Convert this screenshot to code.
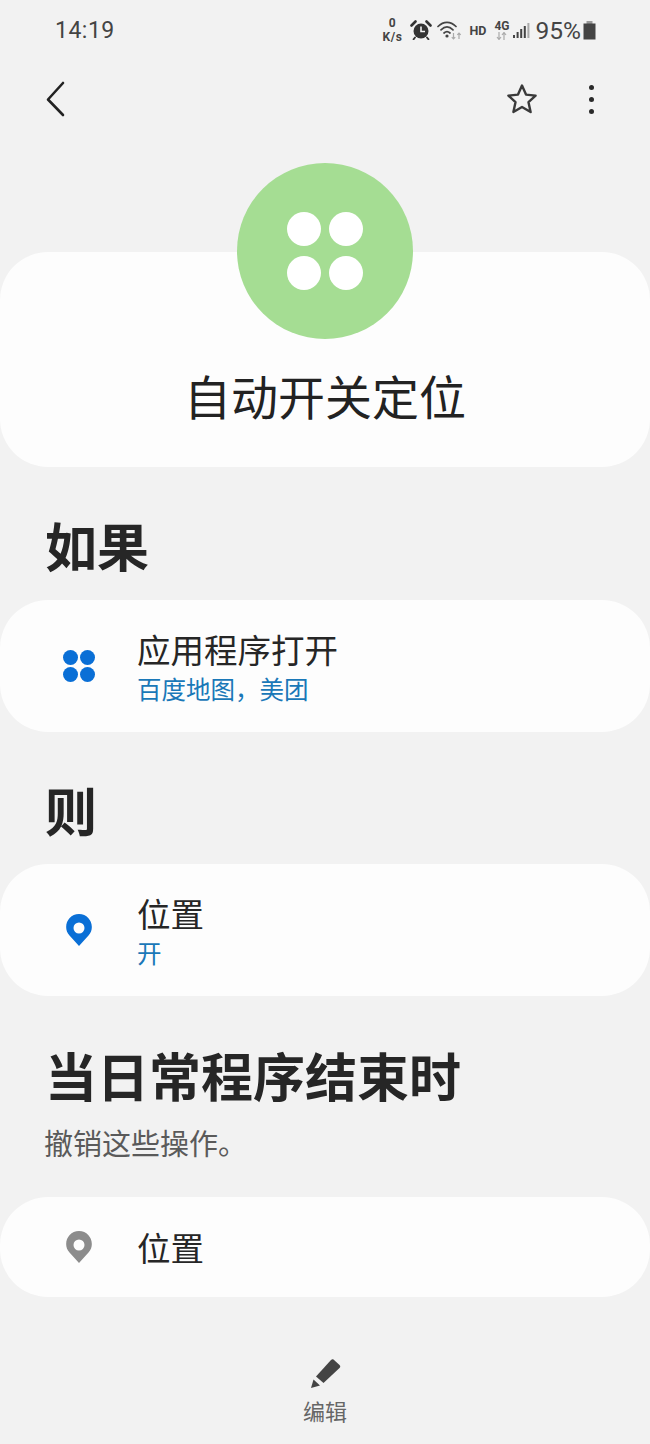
<div class="page">
  <div class="status">
    <span class="time">14:19</span>
    <div class="status-right">
      <span class="speed"><b>0</b><b>K/s</b></span>
      <svg class="alarm" width="22" height="20" viewBox="0 0 22 20">
        <circle cx="11" cy="11" r="7.5" fill="#333" />
        <path d="M11 6.5V11.5H15" fill="none" stroke="#f2f2f2" stroke-width="1.6" />
        <path d="M1.5 5.5L5.5 1.5M20.5 5.5L16.5 1.5" stroke="#333" stroke-width="2.6" stroke-linecap="round" />
        <path d="M5 17.5L3.5 19.3M17 17.5L18.5 19.3" stroke="#333" stroke-width="1.8" stroke-linecap="round" />
      </svg>
      <svg class="wifi" width="25" height="20" viewBox="0 0 25 20">
        <g fill="none" stroke="#444" stroke-width="1.7" stroke-linecap="round">
          <path d="M1 6.5C6.5 1 13.5 1 19 6.5" />
          <path d="M4 9.8C8 6 12 6 16 9.8" />
          <path d="M7 13C9 11.3 11 11.3 13 13" />
        </g>
        <circle cx="10" cy="16" r="1.6" fill="#444" />
        <path d="M16.5 13V19M14.8 17.2L16.5 19L18.2 17.2" fill="none" stroke="#aaa" stroke-width="1.2" />
        <path d="M22 19V13M20.3 14.8L22 13L23.7 14.8" fill="none" stroke="#aaa" stroke-width="1.2" />
      </svg>
      <span class="hd">HD</span>
      <span class="net">
        <b>4G</b>
        <svg width="11" height="8" viewBox="0 0 11 8">
          <path d="M3 0V7M1 5L3 7.5L5 5" fill="none" stroke="#aaa" stroke-width="1.2" />
          <path d="M8 8V1M6 3L8 .5L10 3" fill="none" stroke="#aaa" stroke-width="1.2" />
        </svg>
      </span>
      <svg class="signal" width="17" height="17" viewBox="0 0 17 17">
        <rect x="0" y="13" width="2" height="3" fill="#444" />
        <rect x="3.6" y="10" width="2" height="6" fill="#444" />
        <rect x="7.2" y="7" width="2" height="9" fill="#444" />
        <rect x="10.8" y="4" width="2" height="12" fill="#444" />
        <rect x="14.4" y="1" width="2" height="15" fill="#aaa" />
      </svg>
      <span class="pct">95%</span>
      <svg class="battery" width="13" height="19" viewBox="0 0 13 19">
        <rect x="3.5" y="0" width="6" height="3" fill="#999" />
        <rect x="0.5" y="2.5" width="12" height="16" fill="#444" />
      </svg>
    </div>
  </div>

  <div class="toolbar">
    <svg width="24" height="36" viewBox="0 0 24 36">
      <path d="M20 2L5 18.500L20 34" fill="none" stroke="#222" stroke-width="2.600" stroke-linecap="round" stroke-linejoin="round" />
    </svg>
    <div class="toolbar-right">
      <svg width="34" height="34" viewBox="0 0 34 34">
        <path d="M17 3.500L21 12.600L30.600 13.600L23.500 20.200L25.600 30L17 25L8.400 30L10.500 20.200L3.400 13.600L13 12.600Z" fill="none" stroke="#3a3a3a" stroke-width="2.400" stroke-linejoin="round" />
      </svg>
      <div class="dots"><i></i><i></i><i></i></div>
    </div>
  </div>

  <div class="circle">
    <div class="grid4"><i></i><i></i><i></i><i></i></div>
  </div>
  <div class="card hero">自动开关定位</div>

  <h2 class="first">如果</h2>
  <div class="card row tall">
    <div class="icon"><div class="grid4 small"><i></i><i></i><i></i><i></i></div></div>
    <div>
      <div class="row-title">应用程序打开</div>
      <div class="row-sub">百度地图，美团</div>
    </div>
  </div>

  <h2 class="then">则</h2>
  <div class="card row tall">
    <div class="icon">
      <svg width="28" height="34" viewBox="0 0 28 34">
        <path fill-rule="evenodd" fill="#0a6fd6" d="M14 33L4.500 22.500C-3 14 3 1 14 1S31 14 23.500 22.500ZM14 9.500A5.500 5.500 0 1 0 14 20.500A5.500 5.500 0 1 0 14 9.500Z" />
      </svg>
    </div>
    <div>
      <div class="row-title">位置</div>
      <div class="row-sub">开</div>
    </div>
  </div>

  <h2 class="end">当日常程序结束时</h2>
  <p class="note">撤销这些操作。</p>
  <div class="card row short">
    <div class="icon">
      <svg width="28" height="34" viewBox="0 0 28 34">
        <path fill-rule="evenodd" fill="#8c8c8c" d="M14 33L4.500 22.500C-3 14 3 1 14 1S31 14 23.500 22.500ZM14 9.500A5.500 5.500 0 1 0 14 20.500A5.500 5.500 0 1 0 14 9.500Z" />
      </svg>
    </div>
    <div class="row-title">位置</div>
  </div>

  <div class="edit">
    <svg width="32" height="32" viewBox="0 0 32 32">
      <path fill="#444" d="M24.500 1.500L30.500 7C31.500 8 31.500 9 30.500 10L14.500 25L7 18.500L22 2C23 1 23.500 1 24.500 1.500Z" />
      <path fill="#444" d="M4.500 21.500L11 27.500L2 30Z" />
    </svg>
    <span>编辑</span>
  </div>
</div>

<style>
  :global(body) {
    margin: 0;
    background: #f2f2f2;
  }
  .page {
    height: 1444px;
    overflow: hidden;
    background: #f2f2f2;
    display: flex;
    flex-direction: column;
    font-family: "Noto Sans CJK SC", "Noto Sans", sans-serif;
    color: #252525;
  }
  .status {
    height: 60px;
    padding: 0 54px 0 55px;
    display: flex;
    align-items: center;
    justify-content: space-between;
    font-family: Roboto, sans-serif;
    color: #444;
  }
  .time { font-size: 23px; letter-spacing: 0.5px; }
  .status-right { display: flex; align-items: center; gap: 5px; }
  .speed, .net {
    display: flex;
    flex-direction: column;
    align-items: center;
    font-size: 11px;
    line-height: 11px;
  }
  .speed b, .net b { font-weight: 700; }
  .speed { font-size: 12px; line-height: 14px; letter-spacing: 0.6px; margin-right: 3px; }
  .hd { font-size: 12.500px; font-weight: 700; margin: 0 3px 0 2px; }
  .net b { font-size: 12px; }
  .signal { margin-left: -2px; margin-right: 1px; }
  .pct { font-size: 24.500px; margin-right: -3px; }
  .toolbar {
    height: 78px;
    padding: 0 56px 0 43px;
    display: flex;
    align-items: center;
    justify-content: space-between;
  }
  .toolbar-right { display: flex; align-items: center; gap: 50px; }
  .dots { display: flex; flex-direction: column; gap: 7px; }
  .dots i { width: 5px; height: 5px; border-radius: 50%; background: #2a2a2a; }
  .circle {
    width: 176px;
    height: 176px;
    margin: 25px auto -87px;
    position: relative;
    z-index: 1;
    border-radius: 50%;
    background: #a5dd93;
    display: flex;
    align-items: center;
    justify-content: center;
  }
  .grid4 {
    display: grid;
    grid-template-columns: repeat(2, 34px);
    gap: 10px 8px;
  }
  .grid4 i { height: 34px; border-radius: 50%; background: #fff; }
  .grid4.small { grid-template-columns: repeat(2, 15px); gap: 2px; }
  .grid4.small i { height: 15px; background: #0a6fd6; }
  .card {
    background: #fdfdfd;
    border-radius: 48px;
    flex: none;
  }
  .hero {
    height: 215px;
    box-sizing: border-box;
    padding-top: 105px;
    font-size: 47px;
    line-height: 76px;
    text-align: center;
    color: #222;
  }
  h2 {
    margin: 0;
    padding-left: 45px;
    font-size: 52px;
    line-height: 70px;
    font-weight: 700;
    color: #262626;
  }
  h2.first { margin-top: 43px; margin-bottom: 20px; }
  h2.then { margin-top: 43px; margin-bottom: 19px; }
  h2.end { margin-top: 44px; }
  .note {
    margin: 12px 0 35px 44px;
    font-size: 29px;
    line-height: 40px;
    color: #5a5a5a;
  }
  .row { display: flex; align-items: center; }
  .row.tall { height: 132px; }
  .row.short { height: 100px; }
  .icon {
    width: 137px;
    display: flex;
    justify-content: center;
    padding-left: 21px;
    box-sizing: border-box;
    flex: none;
  }
  .row-title { font-size: 33.500px; line-height: 46px; color: #262626; margin-top: -1px; }
  .row-sub { font-size: 24.500px; line-height: 34px; color: #1a78b8; }
  .edit {
    margin-top: 61px;
    display: flex;
    flex-direction: column;
    align-items: center;
    gap: 4px;
    color: #666;
    font-size: 22px;
    line-height: 32px;
  }
</style>
